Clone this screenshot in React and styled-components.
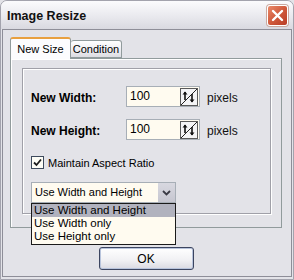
import React from "react";
import styled, { createGlobalStyle } from "styled-components";

const GlobalStyle = createGlobalStyle`
  html, body {
    margin: 0;
    padding: 0;
    background: #e3e3e8;
  }
  * {
    box-sizing: border-box;
  }
`;

const options = ["Use Width and Height", "Use Width only", "Use Height only"];

const fields = [
  { label: "New Width:", value: "100" },
  { label: "New Height:", value: "100" },
];

const SpinIcon = () => (
  <svg width="18" height="18" viewBox="0 0 18 18">
    <rect x="0.5" y="0.5" width="17" height="17" fill="#f4f4f6" stroke="#5a5a5a" />
    <line x1="1" y1="17" x2="17" y2="1" stroke="#222" strokeWidth="1" />
    <path d="M5 12V4" stroke="#111" strokeWidth="1.6" />
    <path d="M2.5 6.5L5 3.5L7.5 6.5Z" fill="#111" />
    <path d="M12 6v8" stroke="#111" strokeWidth="1.6" />
    <path d="M9.5 11.5L12 14.5L14.5 11.5Z" fill="#111" />
  </svg>
);

const App = () => {
  return (
    <>
      <GlobalStyle />
      <Window>
        {/* Title bar */}
        <TitleBar>
          <Title>Image Resize</Title>
          <CloseButton>
            <svg width="13" height="13" viewBox="0 0 13 13">
              <path d="M2 2L11 11M11 2L2 11" stroke="#fff" strokeWidth="2.4" strokeLinecap="round" />
            </svg>
          </CloseButton>
        </TitleBar>

        <Client>
          {/* Tabs */}
          <TabRow>
            <Tab active width={61}>New Size</Tab>
            <Tab width={51}>Condition</Tab>
          </TabRow>
          <Panel>
            <Frame>
              {fields.map((item, index) => (
                <FieldRow key={`field${index}`}>
                  <FieldLabel>{item.label}</FieldLabel>
                  <NumberBox>
                    <span>{item.value}</span>
                    <SpinIcon />
                  </NumberBox>
                  <Unit>pixels</Unit>
                </FieldRow>
              ))}
              <CheckRow>
                <CheckBox>
                  <svg width="9" height="9" viewBox="0 0 9 9">
                    <path d="M1 4.5L3.5 7L8 1.5" stroke="#1e1e1e" strokeWidth="1.8" fill="none" />
                  </svg>
                </CheckBox>
                <span>Maintain Aspect Ratio</span>
              </CheckRow>
              <Combo>
                <ComboText>Use Width and Height</ComboText>
                <ComboButton>
                  <svg width="9" height="6" viewBox="0 0 9 6">
                    <path d="M1 1L4.5 4.5L8 1" stroke="#3a3a44" strokeWidth="1.8" fill="none" />
                  </svg>
                </ComboButton>
                <ComboList>
                  {options.map((opt, index) => (
                    <ComboItem key={`opt${index}`} selected={index === 0}>
                      {opt}
                    </ComboItem>
                  ))}
                </ComboList>
              </Combo>
            </Frame>
          </Panel>
          <ButtonRow>
            <OkButton>OK</OkButton>
          </ButtonRow>
        </Client>
      </Window>
    </>
  );
};

// Styled Components
// ---------------------------------------------------------------------------
const Window = styled.div`
  width: 294px;
  height: 280px;
  display: flex;
  flex-direction: column;
  background: #e3e3e8;
  font-family: "Liberation Sans", Arial, sans-serif;
  font-size: 11px;
  color: #000;
  border: 1px solid #a3a3ad;
  border-radius: 7px 7px 0 0;
  overflow: hidden;
`;

const TitleBar = styled.div`
  height: 28px;
  flex-shrink: 0;
  display: flex;
  align-items: center;
  justify-content: space-between;
  padding: 0 5px 0 6px;
  background: linear-gradient(#fbfbfd, #e9e9ee 55%, #d9d9e0);
`;

const Title = styled.div`
  font-weight: bold;
  font-size: 12.5px;
  color: #111;
  padding-top: 2px;
`;

const CloseButton = styled.div`
  width: 21px;
  height: 21px;
  border: 1px solid #fff;
  border-radius: 3px;
  background: linear-gradient(135deg, #ea8a6a, #d05a3c 50%, #b83c26);
  display: flex;
  align-items: center;
  justify-content: center;
  box-shadow: 0 0 0 1px #c9a9a0;
`;

const Client = styled.div`
  flex: 1;
  display: flex;
  flex-direction: column;
  margin: 0 1px 2px 1px;
  border: 1px solid #8e8e98;
  padding: 7px 9px 0 7px;
`;

const TabRow = styled.div`
  display: flex;
  align-items: flex-end;
  height: 21px;
  position: relative;
  z-index: 1;
`;

const Tab = styled.div`
  width: ${(p) => p.width}px;
  height: ${(p) => (p.active ? "22px" : "18px")};
  margin-bottom: ${(p) => (p.active ? "-1px" : "0")};
  padding-top: ${(p) => (p.active ? "4px" : "2px")};
  text-align: center;
  font-size: 11px;
  border: 1px solid #919b9c;
  border-bottom: ${(p) => (p.active ? "none" : "1px solid #919b9c")};
  border-top: ${(p) => (p.active ? "2px solid #e8a040" : "1px solid #919b9c")};
  border-radius: 3px 3px 0 0;
  background: ${(p) => (p.active ? "#fcfcfe" : "linear-gradient(#ffffff, #ececf0 60%, #dcdce2)")};
  border-left-width: ${(p) => (p.active ? "1px" : "0")};
  white-space: nowrap;
`;

const Panel = styled.div`
  height: 170px;
  border: 1px solid #919b9c;
  background: #e3e3e8;
  padding: 9px 9px 0 11px;
  box-shadow: inset 1px 1px 0 #fff;
`;

const Frame = styled.div`
  width: 249px;
  height: 146px;
  border: 1px solid #a0a0a8;
  box-shadow: 1px 1px 0 #fff, inset 1px 1px 0 #fff;
  padding: 17px 0 0 8px;
  display: flex;
  flex-direction: column;
`;

const FieldRow = styled.div`
  display: flex;
  align-items: center;
  height: 21px;
  margin-bottom: 12px;
`;

const FieldLabel = styled.div`
  width: 95px;
  font-weight: bold;
  font-size: 12px;
  padding-top: 3px;
`;

const NumberBox = styled.div`
  width: 74px;
  height: 21px;
  display: flex;
  align-items: center;
  justify-content: space-between;
  padding: 0 1px 0 3px;
  background: #fffbf0;
  border: 1px solid #a7aeb6;
  font-size: 12px;

  & span {
    padding-bottom: 2px;
  }
`;

const Unit = styled.div`
  margin-left: 7px;
  padding-top: 3px;
  font-size: 12px;
  color: #111;
`;

const CheckRow = styled.div`
  display: flex;
  align-items: center;
  gap: 4px;
  margin-top: 4px;
  height: 13px;
  font-size: 11px;
`;

const CheckBox = styled.div`
  width: 13px;
  height: 13px;
  border: 1px solid #3d4a5c;
  background: #fdfdf6;
  display: flex;
  align-items: center;
  justify-content: center;
`;

const Combo = styled.div`
  position: relative;
  margin-top: 13px;
  width: 145px;
  height: 21px;
  display: flex;
  align-items: center;
  justify-content: space-between;
  border: 1px solid #a7aeb6;
  background: #fffbf0;
  padding: 0 0 0 2px;
`;

const ComboText = styled.span`
  padding-bottom: 1px;
  padding-left: 1px;
`;

const ComboButton = styled.div`
  width: 17px;
  height: 19px;
  background: linear-gradient(#d8d8e0, #c6c6d0);
  display: flex;
  align-items: center;
  justify-content: center;
`;

const ComboList = styled.div`
  position: absolute;
  left: -1px;
  top: 20px;
  width: 145px;
  border: 1px solid #1a1a1a;
  background: #fffbf0;
  padding: 0 0 1px 0;
  z-index: 5;
`;

const ComboItem = styled.div`
  height: 13px;
  line-height: 13px;
  padding-left: 2px;
  font-size: 11.5px;
  background: ${(p) => (p.selected ? "#b1b2be" : "transparent")};
`;

const ButtonRow = styled.div`
  display: flex;
  justify-content: center;
  padding-top: 19px;
`;

const OkButton = styled.div`
  width: 95px;
  height: 23px;
  border: 1px solid #3c4560;
  border-radius: 3px;
  background: linear-gradient(#ffffff, #f0f0f3 60%, #dadae2);
  box-shadow: inset 0 0 0 1px #b8c4dc;
  display: flex;
  align-items: center;
  justify-content: center;
  font-size: 12px;
`;

export default App;
